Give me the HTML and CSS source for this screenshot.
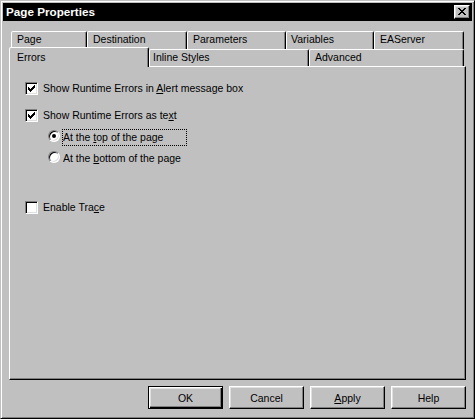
FILE: index.html
```html
<!DOCTYPE html>
<html lang="en">
<head>
<meta charset="utf-8">
<title>Page Properties</title>
<link rel="stylesheet" href="styles.css">
</head>
<body>
<div class="window">
  <div class="titlebar">
    <span class="title">Page Properties</span>
    <button class="close-btn" aria-label="Close">
      <svg width="8" height="7" viewBox="0 0 8 7" shape-rendering="crispEdges"><path d="M0 0h2v1H0zM6 0h2v1H6zM1 1h2v1H1zM5 1h2v1H5zM2 2h4v1H2zM3 3h2v1H3zM2 4h4v1H2zM1 5h2v1H1zM5 5h2v1H5zM0 6h2v1H0zM6 6h2v1H6z" fill="#000"/></svg>
    </button>
  </div>

  <div class="tabs">
    <div class="tab-row back">
      <div class="tab t-page">Page</div>
      <div class="tab t-dest">Destination</div>
      <div class="tab t-params">Parameters</div>
      <div class="tab t-vars">Variables</div>
      <div class="tab t-ea">EAServer</div>
    </div>
    <div class="tab-row front">
      <div class="tab selected t-errors">Errors</div>
      <div class="tab t-inline">Inline Styles</div>
      <div class="tab t-adv">Advanced</div>
    </div>
  </div>

  <div class="panel">
    <div class="opt">
      <span class="cb"><svg width="7" height="7" viewBox="0 0 7 7" shape-rendering="crispEdges"><path d="M6 0h1v1H6zM5 1h2v1H5zM0 2h1v1H0zM4 2h3v1H4zM0 3h2v1H0zM3 3h3v1H3zM0 4h5v1H0zM1 5h3v1H1zM2 6h1v1H2z" fill="#000"/></svg></span>
      <span class="cb-label">Show Runtime Errors in <u>A</u>lert message box</span>
    </div>
    <div class="opt opt-text">
      <span class="cb"><svg width="7" height="7" viewBox="0 0 7 7" shape-rendering="crispEdges"><path d="M6 0h1v1H6zM5 1h2v1H5zM0 2h1v1H0zM4 2h3v1H4zM0 3h2v1H0zM3 3h3v1H3zM0 4h5v1H0zM1 5h3v1H1zM2 6h1v1H2z" fill="#000"/></svg></span>
      <span class="cb-label">Show Runtime Errors as te<u>x</u>t</span>
    </div>
    <div class="radio-group">
      <div class="ropt">
        <span class="radio"><span class="dot"></span></span>
        <span class="r-label focused">At the <u>t</u>op of the page</span>
      </div>
      <div class="ropt">
        <span class="radio"></span>
        <span class="r-label">At the <u>b</u>ottom of the page</span>
      </div>
    </div>
    <div class="opt opt-trace">
      <span class="cb"></span>
      <span class="cb-label">Enable Tra<u>c</u>e</span>
    </div>
  </div>

  <div class="buttons">
    <button class="btn default">OK</button>
    <button class="btn">Cancel</button>
    <button class="btn"><u>A</u>pply</button>
    <button class="btn">Help</button>
  </div>
</div>
</body>
</html>
```
FILE: styles.css
```css
* { box-sizing: border-box; }

html, body {
  margin: 0;
  padding: 0;
  background: #c0c0c0;
}

body {
  font-family: "Liberation Sans", Arial, sans-serif;
  font-size: 10.5px;
  color: #000;
}

u { text-decoration: underline; text-underline-offset: 1px; }

.window {
  width: 475px;
  height: 419px;
  background: #c0c0c0;
  border: 1px solid;
  border-color: #c0c0c0 #000 #000 #c0c0c0;
  box-shadow: inset 1px 1px #fff, inset -1px -1px #808080;
  padding: 2px;
  display: flex;
  flex-direction: column;
}

/* Title bar */
.titlebar {
  height: 18px;
  flex: none;
  background: #000;
  color: #fff;
  display: flex;
  align-items: center;
  justify-content: space-between;
  padding: 0 2px 0 3px;
}

.title {
  font-weight: bold;
  font-size: 11.7px;
  line-height: 18px;
}

.close-btn {
  width: 16px;
  height: 14px;
  padding: 0 0 1px 0;
  background: #c0c0c0;
  border: 1px solid;
  border-color: #fff #000 #000 #fff;
  box-shadow: inset -1px -1px #808080, inset 1px 1px #dfdfdf;
  display: flex;
  align-items: center;
  justify-content: center;
}

.close-btn svg { display: block; }

/* Tabs */
.tabs {
  margin-top: 10px;
  padding: 0 6px;
  flex: none;
}

.tab-row {
  display: flex;
  padding-left: 2px;
}

.tab-row.back { height: 18px; }
.tab-row.front { height: 17px; }

.tab {
  height: 100%;
  flex: none;
  background: #c0c0c0;
  border: 1px solid;
  border-bottom: 0;
  border-color: #fff #000 transparent #fff;
  border-radius: 2px 2px 0 0;
  box-shadow: inset -1px 0 #808080;
  padding: 1px 0 0 5px;
  line-height: 13px;
  white-space: nowrap;
}

.tab.selected {
  position: relative;
  z-index: 2;
  height: 20px;
  margin-top: -2px;
  margin-left: -2px;
  padding: 3px 0 0 7px;
}

.t-page { width: 76px; }
.t-dest { width: 100px; }
.t-params { width: 99px; }
.t-vars { width: 88px; padding-left: 4px; }
.t-ea { width: 90px; }
.t-errors { width: 140px; }
.t-inline { width: 160px; padding-left: 3px; }
.t-adv { width: 155px; }

/* Panel */
.panel {
  flex: none;
  margin: 0 6px;
  height: 314px;
  border: 1px solid;
  border-color: #fff #000 #000 #fff;
  box-shadow: inset -1px -1px #808080;
  padding: 15px 0 0 15px;
}

.opt {
  display: flex;
  align-items: center;
  height: 13px;
  line-height: 13px;
  white-space: nowrap;
}

.opt-text { margin-top: 14px; }
.opt-trace { margin-top: 38px; }

.cb {
  width: 13px;
  height: 13px;
  flex: none;
  background: #fff;
  border: 1px solid;
  border-color: #808080 #fff #fff #808080;
  box-shadow: inset 1px 1px #000, inset -1px -1px #dfdfdf;
  display: flex;
  align-items: center;
  justify-content: center;
}

.cb svg { display: block; }

.cb-label { margin-left: 5px; }

.radio-group {
  margin: 8px 0 0 23px;
  display: flex;
  flex-direction: column;
  gap: 9px;
}

.ropt {
  display: flex;
  align-items: flex-start;
  height: 12px;
  white-space: nowrap;
}

.radio {
  width: 12px;
  height: 12px;
  flex: none;
  border-radius: 50%;
  background: #fff;
  border: 1px solid;
  border-color: #808080 #fff #fff #808080;
  box-shadow: inset 1px 1px #000, inset -1px -1px #dfdfdf;
  display: flex;
  align-items: center;
  justify-content: center;
}

.dot {
  width: 4px;
  height: 4px;
  border-radius: 50%;
  background: #000;
}

.r-label {
  margin-left: 3px;
  height: 15px;
  line-height: 14px;
  flex: none;
}

.r-label.focused {
  width: 123px;
  outline: 1px dotted #000;
}

/* Buttons */
.buttons {
  flex: none;
  display: flex;
  justify-content: flex-end;
  gap: 6px;
  margin-top: 6px;
  padding-right: 6px;
}

.btn {
  width: 75px;
  height: 23px;
  padding: 0;
  font: inherit;
  color: #000;
  background: #c0c0c0;
  border: 1px solid;
  border-color: #fff #000 #000 #fff;
  box-shadow: inset -1px -1px #808080, inset 1px 1px #dfdfdf;
}

.btn.default {
  border-color: #000;
  box-shadow: inset 1px 1px #fff, inset -1px -1px #000, inset -2px -2px #808080, inset 2px 2px #dfdfdf;
}
```
